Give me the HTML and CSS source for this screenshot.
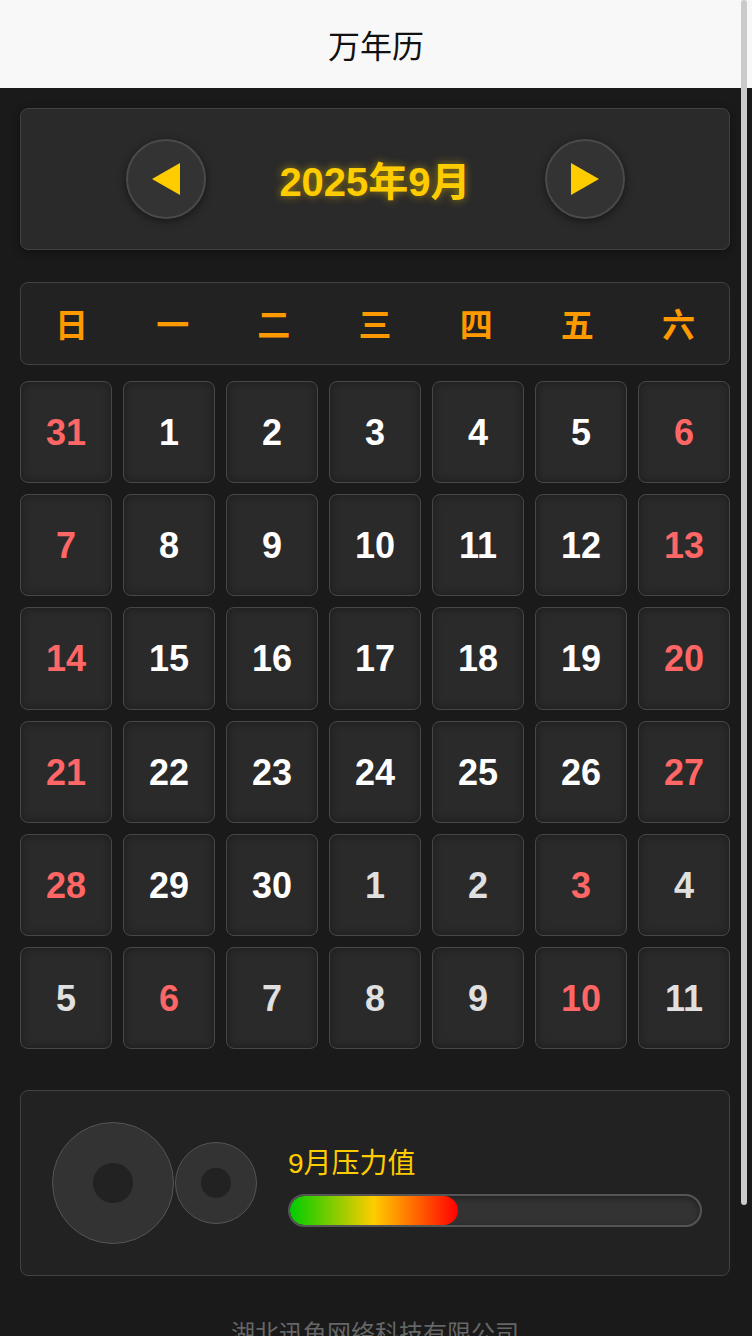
FILE: index.html
```html
<!DOCTYPE html>
<html lang="zh-CN">
<head>
<meta charset="utf-8">
<title>万年历</title>
<link rel="stylesheet" href="styles.css">
</head>
<body>
<header class="top-bar">
  <h1 class="top-title">万年历</h1>
</header>
<main class="page">
  <section class="month-nav">
    <button class="nav-btn" aria-label="上个月">
      <svg width="30" height="34" viewBox="0 0 30 34"><polygon points="29,1 29,33 1,17" fill="#ffcc00"/></svg>
    </button>
    <div class="month-title">2025年9月</div>
    <button class="nav-btn" aria-label="下个月">
      <svg width="30" height="34" viewBox="0 0 30 34"><polygon points="1,1 1,33 29,17" fill="#ffcc00"/></svg>
    </button>
  </section>

  <section class="weekdays">
    <div>日</div><div>一</div><div>二</div><div>三</div><div>四</div><div>五</div><div>六</div>
  </section>

  <section class="days">
    <div class="day other red">31</div><div class="day">1</div><div class="day">2</div><div class="day">3</div><div class="day">4</div><div class="day">5</div><div class="day red">6</div>
    <div class="day red">7</div><div class="day">8</div><div class="day">9</div><div class="day">10</div><div class="day">11</div><div class="day">12</div><div class="day red">13</div>
    <div class="day red">14</div><div class="day">15</div><div class="day">16</div><div class="day">17</div><div class="day">18</div><div class="day">19</div><div class="day red">20</div>
    <div class="day red">21</div><div class="day">22</div><div class="day">23</div><div class="day">24</div><div class="day">25</div><div class="day">26</div><div class="day red">27</div>
    <div class="day red">28</div><div class="day">29</div><div class="day">30</div><div class="day other">1</div><div class="day other">2</div><div class="day other red">3</div><div class="day other">4</div>
    <div class="day other">5</div><div class="day other red">6</div><div class="day other">7</div><div class="day other">8</div><div class="day other">9</div><div class="day other red">10</div><div class="day other">11</div>
  </section>

  <section class="stress-card">
    <div class="gears">
      <div class="gear gear-big"><div class="gear-hole"></div></div>
      <div class="gear gear-small"><div class="gear-hole"></div></div>
    </div>
    <div class="stress">
      <div class="stress-label">9月压力值</div>
      <div class="stress-track"><div class="stress-fill" style="width: 41%"></div></div>
    </div>
  </section>

  <footer class="footer">湖北迅鱼网络科技有限公司</footer>
</main>
<div class="scroll-thumb"></div>
</body>
</html>
```
FILE: styles.css
```css
html {
  scrollbar-width: none;
}
html::-webkit-scrollbar {
  display: none;
}
* {
  box-sizing: border-box;
}
body {
  margin: 0;
  background: #1a1a1a;
  font-family: "Liberation Sans", "Noto Sans CJK SC", sans-serif;
}
.top-bar {
  height: 88px;
  background: #f8f8f8;
  display: flex;
  align-items: center;
  justify-content: center;
}
.top-title {
  margin: 0;
  font-family: "Liberation Serif", "Noto Sans CJK SC", serif;
  font-size: 32px;
  font-weight: normal;
  color: #111;
}
.page {
  padding: 20px 22px 0 20px;
}
.month-nav {
  height: 142px;
  background: #2a2a2a;
  border: 1px solid #414141;
  border-radius: 8px;
  box-shadow: 0 2px 8px rgba(0, 0, 0, 0.4);
  display: flex;
  align-items: center;
  justify-content: center;
  margin-bottom: 32px;
}
.nav-btn {
  width: 80px;
  height: 80px;
  border-radius: 50%;
  background: #333;
  border: 2px solid #4a4a4a;
  box-shadow: 0 2px 8px rgba(0, 0, 0, 0.5);
  display: flex;
  align-items: center;
  justify-content: center;
  padding: 0;
}
.month-title {
  flex: 0 0 339px;
  text-align: center;
  font-size: 40px;
  line-height: 48px;
  font-weight: bold;
  color: #ffcc00;
  text-shadow: 0 0 8px rgba(255, 204, 0, 0.55);
  padding-top: 6px;
}
.weekdays {
  background: #222;
  border: 1px solid #414141;
  border-radius: 8px;
  display: grid;
  grid-template-columns: repeat(7, 1fr);
  padding: 19px 0 14px;
  font-size: 33px;
  line-height: 48px;
  font-weight: bold;
  color: #ff9900;
  text-align: center;
  margin-bottom: 16px;
}
.days {
  display: grid;
  grid-template-columns: repeat(7, 1fr);
  grid-auto-rows: 102.2px;
  gap: 11px;
}
.day {
  background: #2a2a2a;
  border: 1px solid #474747;
  border-radius: 8px;
  box-shadow: inset 0 0 10px rgba(0, 0, 0, 0.35);
  display: flex;
  align-items: center;
  justify-content: center;
  padding-top: 2px;
  font-size: 36px;
  font-weight: bold;
  color: #ffffff;
}
.day.other {
  color: #e0e0e0;
}
.day.red {
  color: #ff6666;
}
.stress-card {
  margin-top: 41px;
  height: 186px;
  background: #222;
  border: 1px solid #414141;
  border-radius: 8px;
  display: flex;
  align-items: center;
  padding: 0 27px 0 31px;
}
.gears {
  display: flex;
  align-items: center;
}
.gear {
  border-radius: 50%;
  background: #333;
  border: 1.5px solid #555;
  display: flex;
  align-items: center;
  justify-content: center;
}
.gear-big {
  width: 122px;
  height: 122px;
}
.gear-big .gear-hole {
  width: 40px;
  height: 40px;
}
.gear-small {
  width: 82px;
  height: 82px;
  margin-left: 1px;
}
.gear-small .gear-hole {
  width: 30px;
  height: 30px;
}
.gear-hole {
  border-radius: 50%;
  background: #222;
}
.stress {
  flex: 1;
  margin-left: 31px;
  margin-top: 8px;
}
.stress-label {
  font-size: 28px;
  line-height: 32px;
  color: #ffcc00;
  margin-bottom: 14px;
}
.stress-track {
  height: 33px;
  border: 2px solid #555;
  border-radius: 17px;
  background: #333;
  box-shadow: inset 0 2px 6px rgba(0, 0, 0, 0.4);
  overflow: hidden;
}
.stress-fill {
  height: 100%;
  border-radius: 15px;
  background: linear-gradient(to right, #00cc00, #ffcc00 50%, #ff0000);
}
.footer {
  text-align: center;
  color: #666;
  font-size: 24px;
  line-height: 36px;
  padding: 40px 0 110px;
}
.scroll-thumb {
  position: fixed;
  top: 0;
  right: 5px;
  width: 6px;
  height: 1205px;
  border-radius: 3px;
  background: #cbcbcb;
}
```
